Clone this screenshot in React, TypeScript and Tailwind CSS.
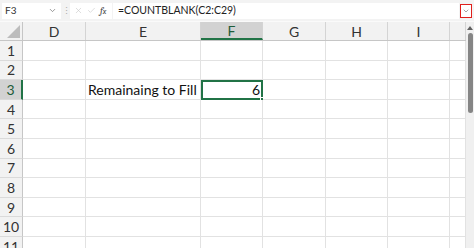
import { ChevronDown, X, Check } from 'lucide-react';

const cols = [
  { key: 'D', w: 'w-[63px]' },
  { key: 'E', w: 'w-[115px]' },
  { key: 'F', w: 'w-[62px]' },
  { key: 'G', w: 'w-[63px]' },
  { key: 'H', w: 'w-[62px]' },
  { key: 'I', w: 'w-[62px]' },
  { key: 'J', w: 'w-[16px]' },
];

const rows = [1, 2, 3, 4, 5, 6, 7, 8, 9, 10, 11];

function FormulaBar() {
  return (
    <div className="flex items-center h-[21px] bg-[#f3f3f3] px-[2px] gap-[1px]">
      <div className="flex items-center justify-between w-[59px] h-[16px] bg-white pl-[3px] pr-[4px] text-[10px] text-[#333]">
        <span>F3</span>
        <ChevronDown className="w-[9px] h-[9px] text-[#777]" strokeWidth={2} />
      </div>
      <div className="w-[7px] text-center text-[9px] leading-none text-[#aaa]">⋮</div>
      <div className="flex items-center gap-[4px] w-[42px] h-[16px] bg-white pl-[4px]">
        <X className="w-[9px] h-[9px] text-[#c4c4c4]" strokeWidth={1.5} />
        <Check className="w-[9px] h-[9px] text-[#c4c4c4]" strokeWidth={1.5} />
        <span className="text-[10px] italic font-serif text-[#444] leading-none">
          f<span className="text-[8px]">x</span>
        </span>
      </div>
      <div className="flex items-center flex-1 h-[16px] bg-white pl-[5px] text-[10.5px] text-[#222]">
        =COUNTBLANK(C2:C29)
      </div>
      <div className="flex items-center justify-center w-[12px] h-[14px] border-[1.5px] border-[#e0201c] bg-white">
        <ChevronDown className="w-[8px] h-[8px] text-[#777]" strokeWidth={2} />
      </div>
    </div>
  );
}

export default function App() {
  return (
    <div className="w-[474px] h-[248px] overflow-hidden bg-white" style={{ fontFamily: 'Lato, "Open Sans", sans-serif' }}>
      <FormulaBar />
      <div className="h-[1px] bg-[#fafafa]" />
      <div className="flex">
        <div className="flex-1 overflow-hidden">
          <div className="flex h-[19px] bg-[#f2f2f2] border-b border-[#c6c6c6]">
            <div className="relative w-[23px] border-r border-[#c6c6c6]">
              <div className="absolute right-[2px] bottom-[2px] w-0 h-0 border-l-[13px] border-l-transparent border-b-[13px] border-b-[#bcbcbc]" />
            </div>
            {cols.map((c) => (
              <div
                key={c.key}
                className={`${c.w} shrink-0 flex items-center justify-center text-[14px] border-r border-[#d4d4d4] ${
                  c.key === 'F' ? 'bg-[#d2d2d2] border-b-2 border-b-[#217346] text-[#1e5c3a]' : 'text-[#333]'
                }`}
              >
                {c.key === 'J' ? '' : c.key}
              </div>
            ))}
          </div>
          {rows.map((r) => (
            <div key={r} className="flex h-[19.6px]">
              <div
                className={`w-[23px] shrink-0 flex items-center justify-center text-[14px] border-b border-[#dadada] ${
                  r === 3 ? 'bg-[#d2d2d2] border-r-2 border-r-[#217346] text-[#1e5c3a]' : 'bg-[#f2f2f2] border-r border-r-[#c6c6c6] text-[#333]'
                }`}
              >
                {r}
              </div>
              {cols.map((c) => {
                const selected = r === 3 && c.key === 'F';
                return (
                  <div
                    key={c.key}
                    className={`${c.w} shrink-0 relative flex items-center text-[14px] text-[#111] whitespace-nowrap ${
                      selected ? 'border-2 border-[#217346] justify-end pr-[1px]' : 'border-r border-b border-[#e2e2e2]'
                    }`}
                  >
                    {r === 3 && c.key === 'E' && <span className="pl-[2px]">Remainaing to Fill</span>}
                    {selected && (
                      <>
                        <span>6</span>
                        <div className="absolute -right-[3px] -bottom-[3px] w-[4px] h-[4px] bg-[#217346] border border-white" />
                      </>
                    )}
                  </div>
                );
              })}
            </div>
          ))}
        </div>
        <div className="w-[8px] shrink-0 bg-[#f0f0f0] flex flex-col items-center pt-[4px]">
          <div className="w-0 h-0 border-l-[3px] border-l-transparent border-r-[3px] border-r-transparent border-b-[4px] border-b-[#606060]" />
          <div className="mt-[3px] w-[5px] h-[80px] rounded-full bg-[#858585]" />
        </div>
      </div>
    </div>
  );
}
